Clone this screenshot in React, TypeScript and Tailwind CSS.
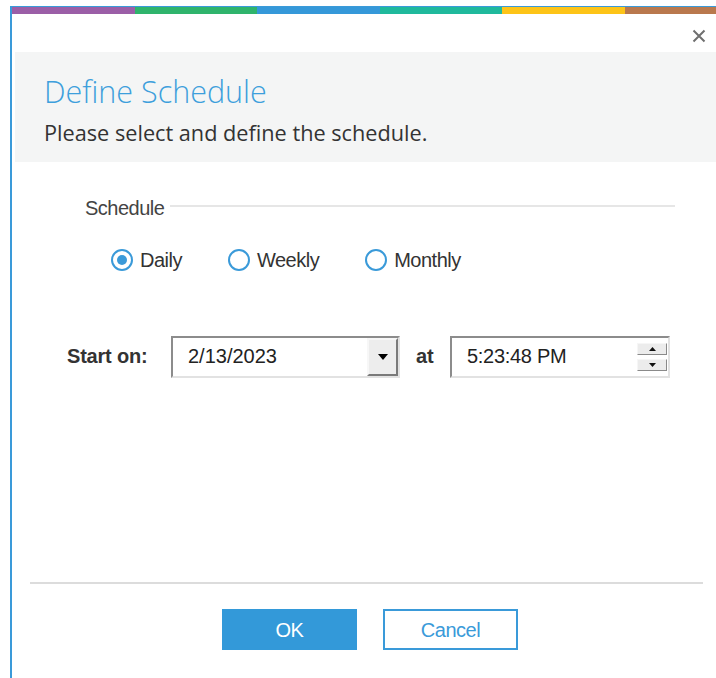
import { useState } from 'react'

const stripe = ['bg-[#9b5ea7]', 'bg-[#2fb46c]', 'bg-[#3598d9]', 'bg-[#1fb99c]', 'bg-[#fdc418]', 'bg-[#b9784d]']

const ui = "font-['Liberation_Sans',Arial,sans-serif]"

function Radio({ label, checked, onSelect }: { label: string; checked: boolean; onSelect: () => void }) {
  return (
    <button type="button" onClick={onSelect} className="flex items-center gap-[7px]">
      <span className="flex h-[22px] w-[22px] items-center justify-center rounded-full border-2 border-[#3a9ad9] bg-white">
        {checked && <span className="h-[10px] w-[10px] rounded-full bg-[#3a9ad9]" />}
      </span>
      <span className="text-[20px] leading-[24px] tracking-[-0.5px] text-[#333]">{label}</span>
    </button>
  )
}

// raised little win32 style button face
function SpinButton({ up }: { up?: boolean }) {
  return (
    <div className="flex h-[12px] w-[30px] items-center justify-center border border-b-[#8a8a8a] border-l-[#f6f6f6] border-r-[#8a8a8a] border-t-[#f6f6f6] bg-[#ececec]">
      <svg width="7" height="4" viewBox="0 0 7 4">
        {up ? <polygon points="0,4 7,4 3.5,0" fill="#111" /> : <polygon points="0,0 7,0 3.5,4" fill="#111" />}
      </svg>
    </div>
  )
}

export default function App() {
  const [freq, setFreq] = useState('Daily')

  return (
    <div className={`h-[678px] w-[716px] overflow-hidden bg-white pl-[10px] pt-[6px] ${ui}`}>
      <div className="flex h-full flex-col border-l-2 border-t border-[#3a9ad9]">
        {/* brand stripe */}
        <div className="flex h-[7px] shrink-0 overflow-hidden">
          {stripe.map((c, i) => (
            <div key={i} className={`h-full w-[122.5px] shrink-0 ${c}`} />
          ))}
        </div>

        <div className="flex h-[38px] shrink-0 items-start justify-end pr-[10px] pt-[15px]">
          <svg width="14" height="14" viewBox="0 0 14 14" className="text-[#6f6f6f]">
            <path d="M1.5 1.5 L12.5 12.5 M12.5 1.5 L1.5 12.5" stroke="currentColor" strokeWidth="2" />
          </svg>
        </div>

        {/* heading */}
        <div className="ml-[3px] h-[110px] shrink-0 bg-[#f4f5f5] pl-[29px] pt-[21px] font-['Open_Sans',sans-serif]">
          <h1 className="text-[30.5px] font-light leading-[36px] text-[#3d9fdc]">Define Schedule</h1>
          <p className="mt-[11px] text-[21.7px] leading-[26px] text-[#333]">Please select and define the schedule.</p>
        </div>

        {/* schedule group */}
        <div className="mr-[41px] ml-[73px] mt-[34px] flex items-start">
          <span className="text-[20px] leading-[24px] tracking-[-0.5px] text-[#444]">Schedule</span>
          <div className="ml-[6px] mt-[9px] h-[2px] flex-1 bg-[#e6e6e6]" />
        </div>

        <div className="ml-[99px] mt-[28px] flex gap-[46px]">
          {['Daily', 'Weekly', 'Monthly'].map((f) => (
            <Radio key={f} label={f} checked={freq === f} onSelect={() => setFreq(f)} />
          ))}
        </div>

        <div className="ml-[55px] mt-[64px] flex items-center">
          <span className="w-[104px] pb-[2px] text-[20px] font-bold leading-[24px] tracking-[-0.2px] text-[#333]">Start on:</span>
          <div className="flex h-[42px] w-[229px] border-2 border-b-[#e2e2e2] border-l-[#8c8c8c] border-r-[#e2e2e2] border-t-[#8c8c8c] bg-white">
            <span className="flex-1 pb-[2px] pl-[15px] text-[20px] leading-[36px] text-[#222]">2/13/2023</span>
            <div className="flex w-[31px] items-center justify-center border-2 border-b-[#7a7a7a] border-l-[#f7f7f7] border-r-[#7a7a7a] border-t-[#f7f7f7] bg-[#ededed]">
              <svg width="10" height="6" viewBox="0 0 10 6">
                <polygon points="0,0 10,0 5,6" fill="#000" />
              </svg>
            </div>
          </div>
          <span className="ml-[16px] w-[34px] pb-[2px] text-[20px] font-bold leading-[24px] text-[#333]">at</span>
          <div className="flex h-[42px] w-[220px] border-2 border-b-[#e2e2e2] border-l-[#8c8c8c] border-r-[#e2e2e2] border-t-[#8c8c8c] bg-white">
            <span className="flex-1 pb-[2px] pl-[15px] text-[20px] leading-[36px] tracking-[-0.3px] text-[#222]">5:23:48 PM</span>
            <div className="mr-[1px] flex flex-col justify-center gap-[4px]">
              <SpinButton up />
              <SpinButton />
            </div>
          </div>
        </div>

        {/* footer */}
        <div className="mt-auto pb-[28px]">
          <div className="ml-[18px] mr-[13px] h-[2px] bg-[#dcdcdc]" />
          <div className="ml-[210px] mt-[25px] flex gap-[26px]">
            <button type="button" className="h-[41px] w-[135px] bg-[#3399d9] text-[20px] tracking-[-0.5px] text-white">
              OK
            </button>
            <button type="button" className="h-[41px] w-[135px] border-2 border-[#3a9ad9] bg-white text-[20px] tracking-[-0.5px] text-[#3a9ad9]">
              Cancel
            </button>
          </div>
        </div>
      </div>
    </div>
  )
}
